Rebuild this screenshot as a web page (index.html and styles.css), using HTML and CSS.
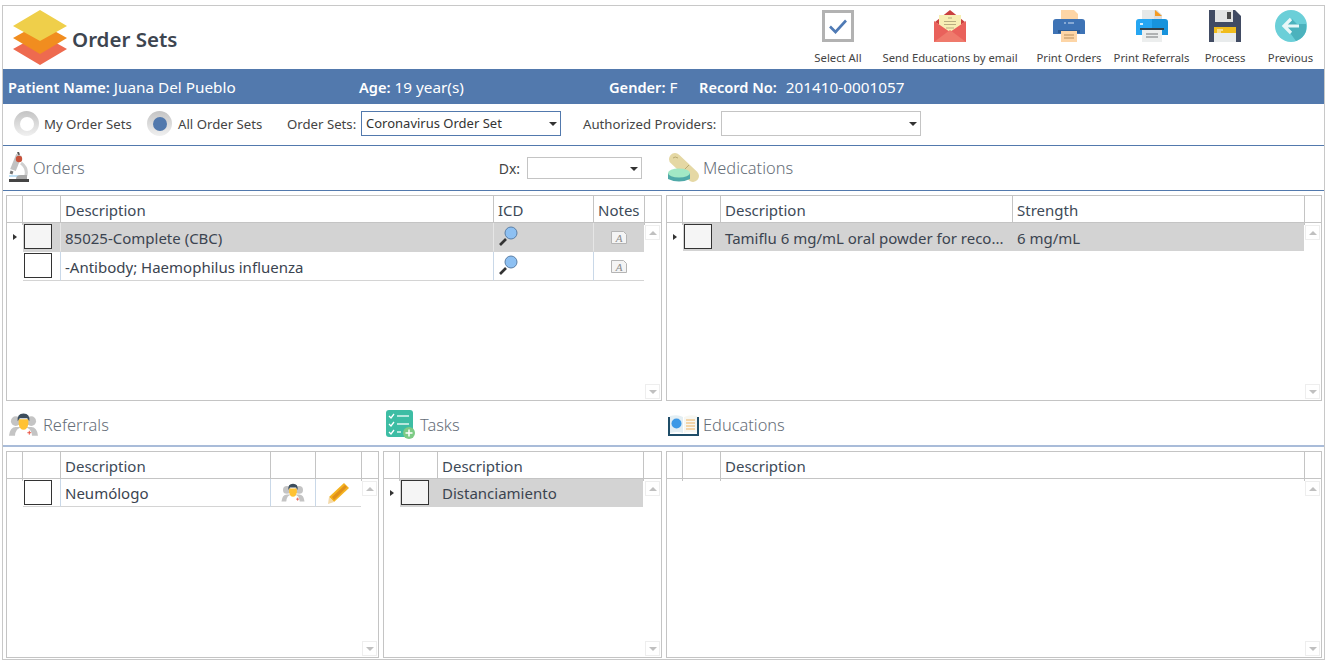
FILE: index.html
```html
<!DOCTYPE html>
<html lang="en">
<head>
<meta charset="utf-8">
<title>Order Sets</title>
<link rel="stylesheet" href="styles.css">
</head>
<body>
<div class="app">
  <header class="top">
    <div class="brand">
      <svg class="logo" viewBox="0 0 56 56"><path fill="#ee6a4f" d="M28 24 55 39 28 55 1 39z"/><path fill="#f18d1f" d="M28 13 55 28 28 44 1 28z"/><path fill="#efcf4a" d="M28 0 55 16 28 31 1 16z"/></svg>
      <h1>Order Sets</h1>
    </div>
    <nav class="tools">
      <div class="tool">
        <svg viewBox="0 0 32 32"><rect x="1.5" y="1.5" width="29" height="29" fill="#fff" stroke="#b2b2b2" stroke-width="3"/><path d="M8 16.5 13.5 22 24 10.5" fill="none" stroke="#4f7ab5" stroke-width="2.6"/></svg>
        <span>Select All</span>
      </div>
      <div class="tool">
        <svg viewBox="0 0 32 32"><path fill="#c9403f" d="M16 0 31 12 16 22 1 12z"/><path fill="#f7eeb4" d="M5 5h22v17H5z"/><path d="M14 8h4M10 11.500h12M10 14.500h12M12 18h8" stroke="#b9ad80" stroke-width="1"/><path fill="#e9615b" d="M0 11 16 22 32 11v21H0z"/><path fill="#ef7a6c" d="M0 32 16 20l16 12z"/></svg>
        <span>Send Educations by email</span>
      </div>
      <div class="tool">
        <svg viewBox="0 0 32 32"><path fill="#fdd5a6" d="M8 0h13l4 4v8H8z"/><path fill="#3e73b5" d="M3 9h26q3 0 3 3v12H0V12q0-3 3-3z"/><path fill="#2b5a94" d="M5 20h22v3H5z"/><path fill="#fdd5a6" d="M8 21h16v11H8z"/><path d="M11 25h10M11 28h10" stroke="#b98f5d"/><path d="M11 13h2M15 13h6" stroke="#cfe0f3"/></svg>
        <span>Print Orders</span>
      </div>
      <div class="tool">
        <svg viewBox="0 0 32 32"><path fill="#e6e8e8" d="M6 0h14v12H6z"/><path fill="#ddd" d="M18 0h3l5 5v7h-8z"/><path fill="#f59b22" d="M19 0l7 6h-7z"/><path fill="#26a6f2" d="M3 9h13v16H0V12q0-3 3-3z"/><path fill="#1793dc" d="M16 9h13q3 0 3 3v13H16z"/><path fill="#333f48" d="M4 18h24v2H4z"/><path fill="#eceeee" d="M6 20h20v12H6z"/><path d="M10 24h12M10 27h12" stroke="#9a9ea0" stroke-width="1.400"/><path d="M4 14h3" stroke="#d5edfb" stroke-width="2"/></svg>
        <span>Print Referrals</span>
      </div>
      <div class="tool">
        <svg viewBox="0 0 32 32"><path fill="#414b63" d="M0 0h26l6 6v26H0z"/><path fill="#e3e4e4" d="M6 0h18v12H6z"/><path fill="#4a4a4a" d="M18 2h4v7h-4z"/><path fill="#f0bc1c" d="M5 17h22v6H5z"/><path fill="#e8ebec" d="M5 23h22v9H5z"/><path d="M8 20h6M8 22h4" stroke="#fff"/></svg>
        <span>Process</span>
      </div>
      <div class="tool">
        <svg viewBox="0 0 32 32"><circle cx="16" cy="16" r="16" fill="#6bcfd8"/><path fill="#4cb2bd" d="M31 21A16 16 0 0 1 21 31L10 16l7-7 5 5h9z"/><path d="M24 16H10M16 9l-7 7 7 7" fill="none" stroke="#e8f7f8" stroke-width="3.200"/></svg>
        <span>Previous</span>
      </div>
    </nav>
  </header>

  <div class="band">
    <div class="band-name"><b>Patient Name:</b> Juana Del Pueblo</div>
    <div class="band-age"><b>Age:</b> 19 year(s)</div>
    <div class="band-gender"><b>Gender:</b> F</div>
    <div><b>Record No:</b><span class="band-record">201410-0001057</span></div>
  </div>

  <div class="filters">
    <span class="radio"></span><span class="radio-label label-my">My Order Sets</span>
    <span class="radio radio-on"></span><span class="radio-label label-all">All Order Sets</span>
    <span class="filter-label">Order Sets:</span>
    <div class="select select-focus">Coronavirus Order Set</div>
    <span class="filter-label label-auth">Authorized Providers:</span>
    <div class="select"></div>
  </div>

  <section class="sec sec-upper">
    <div class="sec-left">
      <svg class="ico-micro" viewBox="0 0 22 32"><path d="M10 0l1 3" stroke="#555" stroke-width="2"/><path d="M11 3 5 18" stroke="#c2c2c2" stroke-width="6"/><path d="M4 19l-1 3" stroke="#777" stroke-width="3"/><path d="M13 11q8 6 4 15" fill="none" stroke="#cfcfcf" stroke-width="3"/><circle cx="11" cy="7" r="3.200" fill="#c8523a"/><path d="M1 24h14" stroke="#bfe0f5" stroke-width="2"/><path fill="#a9a9a9" d="M8 27q0-4 5-4h6v4z"/><path fill="#444" d="M1 27h20v3H1z"/></svg>
      <span class="sec-title">Orders</span>
      <span class="dx-label">Dx:</span>
      <div class="select select-dx"></div>
    </div>
    <div class="sec-right">
      <svg class="ico-med" viewBox="0 0 32 31"><path d="M7 6 25 23" stroke="#e5d8a4" stroke-width="12" stroke-linecap="round"/><path d="M5 5q2-2 5 0M13 20 21 12" fill="none" stroke="#b9aa72"/><path fill="#4fa9a8" d="M0 20h22v6q-11 5-22 0z"/><ellipse cx="11" cy="20" rx="11" ry="4.500" fill="#a2e8c5"/></svg>
      <span class="sec-title">Medications</span>
    </div>
  </section>

  <div class="grids grids-upper">
    <div class="grid cols-orders">
      <div class="grid-head"><i></i><i></i><span>Description</span><span>ICD</span><span>Notes</span><i></i></div>
      <div class="grid-body">
        <div class="rows">
          <div class="row selected">
            <span class="rowhead"></span><span class="cell"><b class="check"></b></span><span class="cell">85025-Complete (CBC)</span>
            <span class="cell cell-icd"><svg class="ico-lens" viewBox="0 0 20 20"><path d="M2 19l6-6" stroke="#333" stroke-width="2.600"/><circle cx="13" cy="7" r="6" fill="#8dc0f2" stroke="#5b7fa6"/></svg></span>
            <span class="cell cell-mid"><svg class="ico-note" viewBox="0 0 16 13"><path d="M.5.500h12l3 3v9H.5z" fill="#f4f4f4" stroke="#b4b4b4"/><text class="note-a" x="8" y="11">A</text></svg></span>
          </div>
          <div class="row">
            <span class="rowhead"></span><span class="cell"><b class="check"></b></span><span class="cell">-Antibody; Haemophilus influenza</span>
            <span class="cell cell-icd"><svg class="ico-lens" viewBox="0 0 20 20"><path d="M2 19l6-6" stroke="#333" stroke-width="2.600"/><circle cx="13" cy="7" r="6" fill="#8dc0f2" stroke="#5b7fa6"/></svg></span>
            <span class="cell cell-mid"><svg class="ico-note" viewBox="0 0 16 13"><path d="M.5.500h12l3 3v9H.5z" fill="#f4f4f4" stroke="#b4b4b4"/><text class="note-a" x="8" y="11">A</text></svg></span>
          </div>
        </div>
        <div class="scroll"><u class="up"></u><u class="down"></u></div>
      </div>
    </div>
    <div class="grid cols-meds">
      <div class="grid-head"><i></i><i></i><span>Description</span><span>Strength</span><i></i></div>
      <div class="grid-body">
        <div class="rows">
          <div class="row selected">
            <span class="rowhead"></span><span class="cell"><b class="check"></b></span><span class="cell">Tamiflu 6 mg/mL oral powder for reco...</span><span class="cell">6 mg/mL</span>
          </div>
        </div>
        <div class="scroll"><u class="up"></u><u class="down"></u></div>
      </div>
    </div>
  </div>

  <section class="sec sec-lower">
    <div class="sec-ref">
      <svg class="ico-ref" viewBox="0 0 30 26"><circle cx="7" cy="9" r="5" fill="#c4c4c4"/><circle cx="23" cy="9" r="5" fill="#c4c4c4"/><path fill="#c4c4c4" d="M0 24q1-9 7-9h16q6 0 7 9z"/><path fill="#fff" d="M6 26q0-11 9-11t9 11z"/><path fill="#ffc233" d="M10 7h10v5q-1 6-5 6t-5-6z"/><path fill="#3c4d5c" d="M9 9q-1-8 6-8t6 8l-2-3h-8z"/><path d="M19 21h4M21 19v4" stroke="#e8503f"/></svg>
      <span class="sec-title">Referrals</span>
    </div>
    <div class="sec-task">
      <svg class="ico-task" viewBox="0 0 29 29"><rect width="27" height="27" rx="3" fill="#3dbda4"/><path d="M3 6l2 2 3-4M3 14l2 2 3-4M3 22l2 2 3-4" fill="none" stroke="#fff" stroke-width="1.300"/><path d="M11 6h12M11 14h12M11 22h4" stroke="#dff5ef" stroke-width="1.600"/><circle cx="23" cy="23" r="6" fill="#7dcb85"/><path d="M19.500 23h7M23 19.500v7" stroke="#fff" stroke-width="1.500"/></svg>
      <span class="sec-title">Tasks</span>
    </div>
    <div class="sec-edu">
      <svg class="ico-edu" viewBox="0 0 31 22"><path fill="#1f4d68" d="M0 3h2v17h27V3h2v19H0z"/><path fill="#e3eef3" d="M2 2q8-2 13 1v16q-5-2-13 0z"/><path fill="#f7f7f2" d="M16 3q6-3 13-1v17q-7-2-13 0z"/><circle cx="8.500" cy="9.500" r="5" fill="#3b98e6"/><path d="M18 6h9M18 9h9M18 12h9M18 15h9" stroke="#f2b460" stroke-width="1.200"/></svg>
      <span class="sec-title">Educations</span>
    </div>
  </section>

  <div class="grids grids-lower">
    <div class="grid cols-ref">
      <div class="grid-head"><i></i><i></i><span>Description</span><i></i><i></i><i></i></div>
      <div class="grid-body">
        <div class="rows">
          <div class="row">
            <span class="rowhead rowhead-plain"></span><span class="cell"><b class="check"></b></span><span class="cell">Neumólogo</span>
            <span class="cell cell-mid"><svg class="ico-doc" viewBox="0 0 30 26"><circle cx="7" cy="9" r="5" fill="#c4c4c4"/><circle cx="23" cy="9" r="5" fill="#c4c4c4"/><path fill="#c4c4c4" d="M0 24q1-9 7-9h16q6 0 7 9z"/><path fill="#fff" d="M6 26q0-11 9-11t9 11z"/><path fill="#ffc233" d="M10 7h10v5q-1 6-5 6t-5-6z"/><path fill="#3c4d5c" d="M9 9q-1-8 6-8t6 8l-2-3h-8z"/><path d="M19 21h4M21 19v4" stroke="#e8503f"/></svg></span>
            <span class="cell cell-mid"><svg class="ico-pencil" viewBox="0 0 22 22"><path fill="#f4b21f" d="M16 1l5 5L6 20l-5-5z"/><path fill="#f4d9a8" d="M1 15l5 5-6 2z"/><path fill="#e0901a" d="M4 15 17 3l2 2L6 18z"/></svg></span>
          </div>
        </div>
        <div class="scroll"><u class="up"></u><u class="down"></u></div>
      </div>
    </div>
    <div class="grid cols-task">
      <div class="grid-head"><i></i><i></i><span>Description</span><i></i></div>
      <div class="grid-body">
        <div class="rows">
          <div class="row selected">
            <span class="rowhead"></span><span class="cell"><b class="check"></b></span><span class="cell">Distanciamiento</span>
          </div>
        </div>
        <div class="scroll"><u class="up"></u><u class="down"></u></div>
      </div>
    </div>
    <div class="grid cols-edu">
      <div class="grid-head"><i></i><i></i><span>Description</span><i></i></div>
      <div class="grid-body">
        <div class="rows"></div>
        <div class="scroll"><u class="up"></u><u class="down"></u></div>
      </div>
    </div>
  </div>
</div>
</body>
</html>
```

FILE: styles.css
```css
* { box-sizing: border-box; }
html, body { margin: 0; padding: 0; background: #fff; }
body { padding: 5px 0 0 2px; font-family: "Noto Sans", "Open Sans", sans-serif; color: #333; width: 1330px; height: 664px; overflow: hidden; }

.app { width: 1323px; height: 655px; border: 1px solid #c8c8c8; display: flex; flex-direction: column; }

.top { height: 63px; display: flex; justify-content: space-between; flex: none; }
.brand { display: flex; align-items: flex-start; padding: 4px 0 0 9px; }
.logo { width: 56px; height: 56px; display: block; }
.brand h1 { margin: 14px 0 0 4px; font-size: 20.500px; line-height: 30px; font-weight: 600; color: #3d4550; white-space: nowrap; }
.tools { display: grid; grid-template-columns: 68px 156px 82px 83px 64px 67px; }
.tool { display: flex; flex-direction: column; align-items: center; padding-top: 4px; font-size: 11.300px; line-height: 16px; color: #444; white-space: nowrap; }
.tool svg { width: 32px; height: 32px; display: block; margin-bottom: 8px; }

.band { height: 35px; flex: none; background: #5279ad; color: #fff; display: flex; align-items: center; padding-left: 5px; font-size: 15.300px; line-height: 20px; white-space: nowrap; }
.band b { font-weight: 600; font-size: 14.600px; }
.band-name { width: 351px; }
.band-age { width: 250px; }
.band-gender { width: 90px; }
.band-record { margin-left: 9px; }

.filters { height: 42px; flex: none; display: flex; align-items: center; padding: 0 0 2px 11px; font-size: 13.200px; color: #444; white-space: nowrap; border-bottom: 1px solid #5279ad; }
.radio { width: 25px; height: 25px; border-radius: 50%; background: linear-gradient(#c4c4c4, #f0f0f0); display: flex; align-items: center; justify-content: center; flex: none; }
.radio::after { content: ""; width: 14px; height: 14px; border-radius: 50%; background: #fff; }
.radio-on::after { background: #5279ad; }
.radio-label { margin-left: 5px; }
.label-my { width: 103px; }
.label-all { width: 109px; margin-left: 6px; }
.filter-label { width: 74px; }
.label-auth { width: 138px; margin-left: 22px; }
.select { width: 200px; height: 25px; border: 1px solid #c4c4c4; padding-left: 4px; line-height: 23px; font-size: 13px; color: #333; position: relative; background: #fff; flex: none; }
.select::after { content: ""; position: absolute; right: 3px; top: 10px; border: 4px solid transparent; border-top: 4px solid #333; }
.select-focus { border-color: #5279ad; }
.select-dx { width: 115px; height: 22px; }
.select-dx::after { top: 9px; }

.sec { flex: none; display: flex; font-size: 16.400px; color: #666e78; white-space: nowrap; }
.sec > div { display: flex; align-items: center; }
.sec-title { font-weight: 300; line-height: 24px; }
.sec-upper { height: 45px; border-bottom: 1px solid #5279ad; }
.sec-left { width: 664px; padding-left: 5px; }
.sec-upper .sec-title { margin-left: 3px; }
.dx-label { width: 28px; margin-left: 414px; font-size: 14px; color: #444; }
.sec-right { margin-left: 1px; }
.ico-micro { width: 22px; height: 32px; }
.ico-med { width: 32px; height: 31px; }
.sec-lower { height: 46px; border-bottom: 2px solid #a9bcd9; }
.sec-lower > div { padding-top: 3px; }
.sec-ref { width: 383px; padding-left: 6px; }
.ico-ref { width: 29px; height: 26px; margin-right: 5px; }
.sec-task { width: 282px; }
.ico-task { width: 29px; height: 29px; margin-right: 5px; }
.ico-edu { width: 31px; height: 22px; margin-right: 4px; }

.grids { flex: none; display: flex; gap: 4px; padding: 4px 0 0 3px; }
.grids-upper { height: 210px; }
.grids-lower { height: 211px; }
.grid { border: 1px solid #c4c4c4; display: flex; flex-direction: column; background: #fff; }
.grids-upper .grid { height: 206px; }
.grids-lower .grid { height: 207px; }
.cols-orders { width: 656px; }
.cols-meds { width: 656px; }
.cols-ref { width: 373px; }
.cols-task { width: 279px; }
.cols-edu { width: 656px; }

.grid-head, .row { display: grid; }
.grid-head { height: 27px; flex: none; border-bottom: 1px solid #c4c4c4; font-size: 15px; line-height: 29px; color: #3d4a58; }
.grid-head > * { border-right: 1px solid #c4c4c4; padding-left: 4px; font-style: normal; white-space: nowrap; }
.grid-head > :last-child { border-right: 0; }
.grid-body { flex: 1; display: flex; min-height: 0; }
.rows { flex: 1; min-width: 0; }
.row { height: 29px; font-size: 15px; line-height: 30px; color: #3b4450; }
.cols-meds .row, .cols-task .row, .cols-ref .row { height: 28px; }
.grids-lower .row { line-height: 28px; }
.cols-orders .grid-head { grid-template-columns: 16px 38px 433px 100px 51px 17px; }
.cols-orders .row { grid-template-columns: 16px 38px 433px 100px 50px; }
.cols-meds .grid-head { grid-template-columns: 16px 38px 292px 292px 17px; }
.cols-meds .row { grid-template-columns: 16px 38px 292px 291px; }
.cols-ref .grid-head { grid-template-columns: 16px 38px 210px 45px 46px 17px; }
.cols-ref .row { grid-template-columns: 16px 38px 210px 45px 45px; }
.cols-task .grid-head { grid-template-columns: 16px 38px 206px 17px; }
.cols-task .row { grid-template-columns: 16px 38px 205px; }
.cols-edu .grid-head { grid-template-columns: 16px 38px 584px 17px; }

.cell { border-bottom: 1px solid #d4d4d4; border-right: 1px solid #c9d8e8; padding-left: 4px; white-space: nowrap; overflow: hidden; display: block; }
.cell:last-child { border-right: 0; }
.selected .cell { background: #d3d3d3; border-color: #d3d3d3; }
.cols-orders .selected .cell { border-right-color: #e6e6e6; }
.cols-orders .selected .cell:last-child { border-right: 0; }
.rowhead { position: relative; display: block; }
.selected .rowhead::after { content: ""; position: absolute; left: 6px; top: 11px; border: 3.500px solid transparent; border-left: 4px solid #333; border-right: 0; }
.check { display: block; width: 28px; height: 25px; margin: 1px 0 0 -3px; border: 1px solid #333; background: #fff; }
.selected .check { background: #f5f5f5; }
.cell-mid { display: flex; align-items: center; justify-content: center; padding-left: 0; }
.cell-icd { display: flex; align-items: center; }
.ico-lens { width: 20px; height: 20px; margin-top: -3px; }
.ico-note { width: 16px; height: 13px; }
.note-a { font-family: "Liberation Serif", serif; font-style: italic; font-size: 11px; fill: #8a8a8a; text-anchor: middle; }
.ico-doc { width: 24px; height: 20px; }
.ico-pencil { width: 22px; height: 22px; }

.scroll { width: 17px; flex: none; padding: 2px 1px 1px; display: flex; flex-direction: column; justify-content: space-between; }
.scroll u { display: flex; width: 15px; height: 15px; border: 1px solid #eeeeee; align-items: center; justify-content: center; }
.up::after { content: ""; border: 4px solid transparent; border-top: 0; border-bottom: 4px solid #c0c0c0; }
.down::after { content: ""; border: 4px solid transparent; border-bottom: 0; border-top: 4px solid #c0c0c0; }
```
